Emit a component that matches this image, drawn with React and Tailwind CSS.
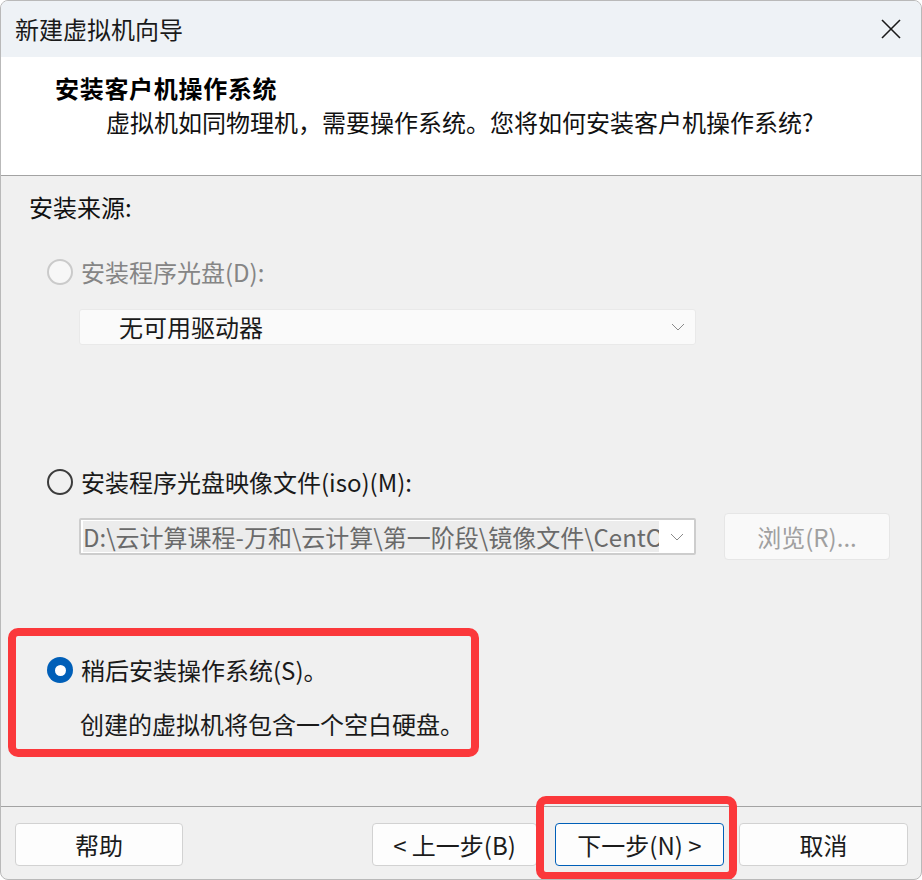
import React from "react";

const FONT = "font-['Noto_Sans_CJK_SC','Microsoft_YaHei','Noto_Sans',sans-serif]";

function Chevron() {
  return (
    <svg width="14" height="8" viewBox="0 0 14 8" className="shrink-0">
      <polyline points="1,1 7,7 13,1" fill="none" stroke="#8a8a8a" strokeWidth="1" />
    </svg>
  );
}

function Btn({ children, className = "", primary = false }) {
  return (
    <div
      className={
        "h-[43px] flex items-center justify-center rounded-[4px] bg-[#fdfdfd] text-[24px] leading-none text-[#1b1b1b] " +
        (primary ? "border border-[#005fb8] " : "border border-[#d2d2d2] ") +
        className
      }
    >
      {children}
    </div>
  );
}

export default function App() {
  return (
    <div className={"relative w-[922px] h-[880px] overflow-hidden rounded-[8px] border border-[#b9b9b9] bg-[#f0f0f0] flex flex-col " + FONT}>
      {/* Title bar */}
      <div className="h-[56px] shrink-0 bg-[#eef2f6] flex items-center justify-between pl-[14px] pr-[20px]">
        <span className="text-[24px] leading-none text-[#1a1a1a]">新建虚拟机向导</span>
        <svg width="20" height="20" viewBox="0 0 20 20">
          <line x1="1" y1="1" x2="19" y2="19" stroke="#1a1a1a" strokeWidth="1.6" />
          <line x1="19" y1="1" x2="1" y2="19" stroke="#1a1a1a" strokeWidth="1.6" />
        </svg>
      </div>

      {/* Header */}
      <div className="h-[119px] shrink-0 bg-white border-b border-[#a3a3a3] pt-[15px] pl-[54px] flex flex-col">
        <div className="text-[24px] leading-[32px] font-bold tracking-[0.7px] text-black">安装客户机操作系统</div>
        <div className="mt-[2px] ml-[51px] text-[24px] leading-[32px] text-[#111]">
          虚拟机如同物理机，需要操作系统。您将如何安装客户机操作系统?
        </div>
      </div>

      {/* Body */}
      <div className="h-[630px] shrink-0 flex flex-col text-[24px]">
        <div className="mt-[15px] pl-[28px] leading-[32px] text-[#111]">安装来源:</div>

        {/* Option 1 (disabled) */}
        <div className="mt-[33px] ml-[46px] h-[32px] flex items-center gap-[8px]">
          <div className="w-[26px] h-[26px] rounded-full border-2 border-[#cacaca] bg-[#f7f7f7]" />
          <span className="leading-[32px] text-[#858585]">安装程序光盘(D):</span>
        </div>
        <div className="mt-[21px] ml-[78px] w-[617px] h-[36px] flex items-center justify-between bg-[#fafafa] border border-[#e9e9e9] rounded-[3px] pl-[39px] pr-[10px]">
          <span className="leading-none text-[#1a1a1a]">无可用驱动器</span>
          <Chevron />
        </div>

        {/* Option 2 */}
        <div className="mt-[121px] ml-[46px] h-[32px] flex items-center gap-[8px]">
          <div className="w-[26px] h-[26px] rounded-full border-2 border-[#3c3c3c]" />
          <span className="leading-[32px] text-[#1a1a1a]">安装程序光盘映像文件(iso)(M):</span>
        </div>
        <div className="mt-[15px] ml-[78px] h-[47px] flex items-center">
          <div className="w-[617px] h-[37px] flex items-center justify-between bg-white border-2 border-[#cdcdcd] rounded-[2px] pl-[2px] pr-[10px]">
            <div className="w-[576px] h-[31px] overflow-hidden whitespace-nowrap bg-[#ececec] flex items-center">
              <span className="leading-none text-[#6a6a6a]">D:\云计算课程-万和\云计算\第一阶段\镜像文件\CentO</span>
            </div>
            <Chevron />
          </div>
          <div className="ml-[28px] w-[166px] h-[47px] flex items-center justify-center rounded-[4px] bg-[#f9f9f9] border border-[#e6e6e6] text-[#a0a0a0] leading-none">
            浏览(R)...
          </div>
        </div>

        {/* Option 3 (checked) */}
        <div className="mt-[94px] ml-[46px] h-[32px] flex items-center gap-[8px]">
          <div className="w-[26px] h-[26px] rounded-full bg-[#005fb8] flex items-center justify-center">
            <div className="w-[11px] h-[11px] rounded-full bg-white" />
          </div>
          <span className="leading-[32px] text-[#1a1a1a]">稍后安装操作系统(S)。</span>
        </div>
        <div className="mt-[22px] ml-[79px] leading-[32px] text-[#1a1a1a]">创建的虚拟机将包含一个空白硬盘。</div>
      </div>

      {/* Footer */}
      <div className="flex-1 border-t border-[#a3a3a3] pt-[16px] flex items-start">
        <Btn className="ml-[14px] w-[168px]">帮助</Btn>
        <Btn className="ml-[189px] w-[165px]">&lt;&nbsp;上一步(B)</Btn>
        <Btn primary className="ml-[18px] w-[169px]">下一步(N)&nbsp;&gt;</Btn>
        <Btn className="ml-[15px] w-[169px]">取消</Btn>
      </div>

      {/* Annotation overlays */}
      <div className="absolute left-[7px] top-[627px] w-[471px] h-[129px] border-[8px] border-[#fb383b] rounded-[10px] pointer-events-none" />
      <div className="absolute left-[535px] top-[795px] w-[201px] h-[84px] border-[8px] border-[#fb383b] rounded-[10px] pointer-events-none" />
    </div>
  );
}
